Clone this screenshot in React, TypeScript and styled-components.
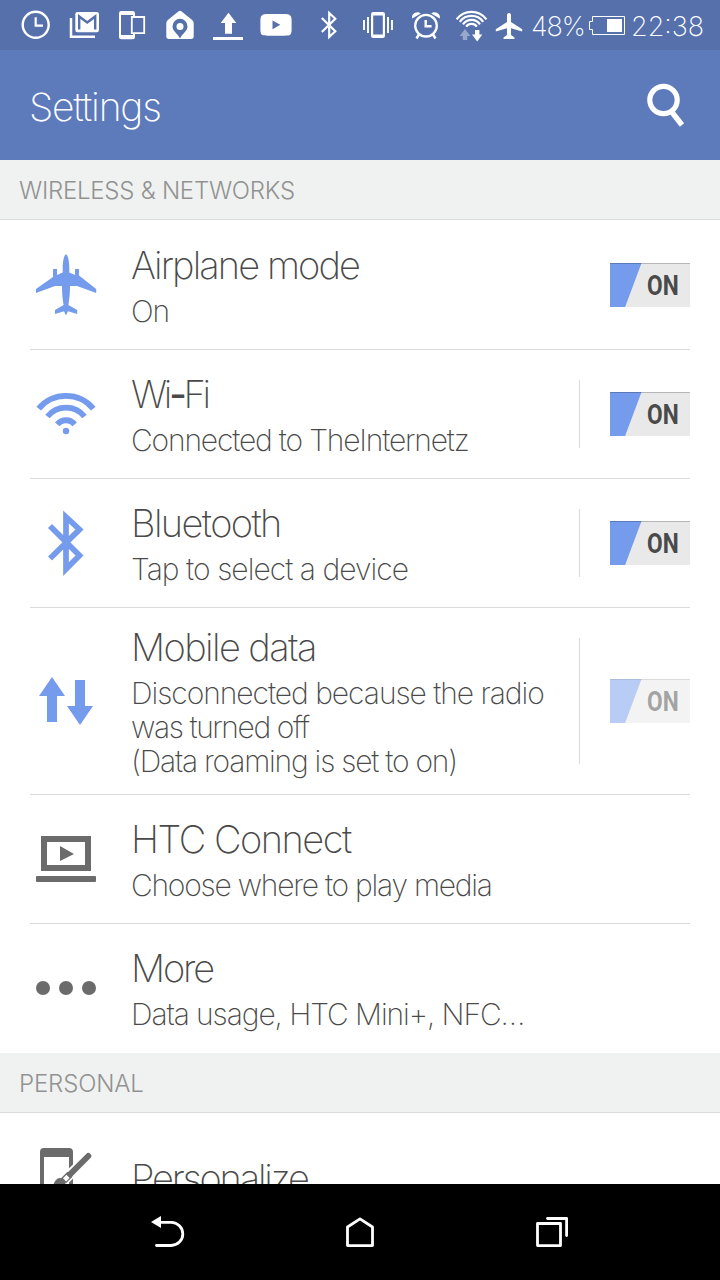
import React from "react";
import styled, { createGlobalStyle } from "styled-components";

const blue = "#759bed";
const grey = "#6b6b6b";

const GlobalStyle = createGlobalStyle`
  * { box-sizing: border-box; }
  body { margin: 0; background: #fff; font-family: Inter, "Liberation Sans", sans-serif; }
  svg { display: block; flex: none; }
`;

const Screen = styled.div`
  width: 720px;
  height: 1280px;
  display: flex;
  flex-direction: column;
  overflow: hidden;
  background: #fff;
`;

const StatusBar = styled.header`
  height: 50px;
  flex: none;
  display: flex;
  align-items: center;
  padding-left: 12px;
  background: #5570ab;
  color: #fff;
`;

const StatusText = styled.span<{ $width: number; $track: number; $left: number }>`
  width: ${(p) => p.$width}px;
  margin-left: ${(p) => p.$left}px;
  padding-top: 3px;
  font-size: 27px;
  font-weight: 200;
  line-height: 34px;
  letter-spacing: ${(p) => p.$track}px;
  white-space: nowrap;
`;

const TitleBar = styled.div`
  height: 110px;
  flex: none;
  display: flex;
  align-items: center;
  justify-content: space-between;
  padding: 4px 24px 0 29px;
  background: #5d7abb;
  color: #fff;
`;

const PageTitle = styled.h1`
  margin: 0;
  font-size: 39px;
  font-weight: 200;
  line-height: 48px;
  letter-spacing: -1.2px;
`;

const Content = styled.main`
  flex: 1;
  min-height: 0;
  overflow: hidden;
`;

const SectionHeader = styled.h2<{ $track: number }>`
  height: 60px;
  margin: 0;
  padding: 1px 19px 0;
  display: flex;
  align-items: center;
  background: #f0f2f1;
  border-bottom: 1px solid #dadcdb;
  color: #929292;
  font-size: 24px;
  font-weight: 300;
  letter-spacing: ${(p) => p.$track}px;
`;

const List = styled.ul`
  margin: 0 30px;
  padding: 0 0 1px;
  list-style: none;
`;

const Row = styled.li<{ $height?: number }>`
  height: ${(p) => p.$height ?? 129}px;
  display: flex;
  align-items: center;
  & + & { box-shadow: inset 0 1px #dadcdb; }
`;

const Labels = styled.div`
  flex: 1;
  padding: 1px 0 0 29px;
  color: #4a4a4a;
  white-space: nowrap;
`;

const Title = styled.div<{ $track: number }>`
  font-size: 38px;
  font-weight: 200;
  line-height: 46px;
  letter-spacing: ${(p) => p.$track}px;
  &:not(:last-child) { margin-bottom: 6px; }
`;

const Dash = styled.span`
  font-weight: 500;
`;

const Detail = styled.div<{ $track: number }>`
  font-size: 30px;
  font-weight: 200;
  line-height: 34.3px;
  letter-spacing: ${(p) => p.$track}px;
`;

const ToggleArea = styled.div<{ $divided?: boolean }>`
  align-self: stretch;
  margin: 31px 0 30px;
  width: 111px;
  display: flex;
  align-items: center;
  justify-content: flex-end;
  border-left: 1px solid ${(p) => (p.$divided ? "#dadcdb" : "transparent")};
`;

const Switch = styled.div<{ $disabled?: boolean }>`
  width: 80px;
  height: 44px;
  padding-right: 11px;
  display: flex;
  align-items: center;
  justify-content: flex-end;
  background: linear-gradient(rgba(0, 0, 0, 0.22), rgba(0, 0, 0, 0.22)) top / 100% 1px no-repeat,
    linear-gradient(110.5deg, ${blue} 32.2%, #e9e9e9 33.2%);
  opacity: ${(p) => (p.$disabled ? 0.5 : 1)};
`;

const SwitchLabel = styled.span`
  color: #4a4a4a;
  font: 700 27px/32px Roboto, sans-serif;
  transform: scaleX(0.84);
  transform-origin: right center;
  padding-top: 2px;
`;

const NavBar = styled.nav`
  height: 96px;
  flex: none;
  display: flex;
  align-items: center;
  justify-content: center;
  gap: 120px;
  background: #000;
`;

type IconProps = { box: string; w: number; h: number; children: React.ReactNode };
const Icon = ({ box, w, h, children }: IconProps) => (
  <svg width={w} height={h} viewBox={box} fill="none">{children}</svg>
);

const StatusIcons = () => (
  <>
    <Icon box="12 0 48 50" w={48} h={50}>
      <circle cx="35.7" cy="24.8" r="13" stroke="#fff" strokeWidth="2.4" />
      <path d="M35.7 17.3V25.6H43" stroke="#fff" strokeWidth="2.2" />
    </Icon>
    <Icon box="60 0 48 50" w={48} h={50}>
      <path d="M71 18V36.7H95" stroke="#fff" strokeWidth="2.5" />
      <rect x="75.3" y="12" width="23.7" height="20.3" rx="2.2" fill="#fff" />
      <path d="M79.2 29.5V16.5L87.2 22.5L95.2 16.5V29.5" stroke="#5570ab" strokeWidth="2.4" />
    </Icon>
    <Icon box="108 0 48 50" w={48} h={50}>
      <path fillRule="evenodd" fill="#fff" d="M121.3 11H132.7Q135 11 135 13.2V37Q135 39.3 132.7 39.3H121.3Q119 39.3 119 37V13.2Q119 11 121.3 11ZM121 15V35H133V15Z" />
      <path d="M131.8 17H144.2V33.2H131.8Z" fill="#5570ab" stroke="#fff" strokeWidth="1.8" />
    </Icon>
    <Icon box="156 0 48 50" w={48} h={50}>
      <path fill="#fff" d="M178.7 11.3Q180 10.3 181.3 11.3L192.2 20Q193.7 21.3 193.7 23V36.3Q193.7 39 191 39H169Q166.3 39 166.3 36.3V23Q166.3 21.3 167.8 20Z" />
      <path fill="#5570ab" d="M180 38.5C177.5 33 172.5 31.5 172.5 26.2A7.5 7.5 0 0 1 187.5 26.2C187.5 31.5 182.5 33 180 38.5Z" />
      <circle cx="180" cy="26.4" r="3.5" fill="#fff" />
    </Icon>
    <Icon box="204 0 48 50" w={48} h={50}>
      <path fill="#fff" d="M228.5 12.7L236.3 23H232V33.7H225V23H220.7ZM213 37H243V40H213Z" />
    </Icon>
    <Icon box="252 0 48 50" w={48} h={50}>
      <path fill="#fff" d="M276 14C286 14 288 14 289.3 14.8Q291.6 16 291.6 19V31Q291.6 34 289.3 35.2C287 36 265 36 262.7 35.2Q260.4 34 260.4 31V19Q260.4 16 262.7 14.8C264 14 266 14 276 14Z" />
      <path fill="#5570ab" d="M272.5 20.5L280.3 24.8L272.5 29.2Z" />
    </Icon>
    <Icon box="300 0 54 50" w={54} h={50}>
      <path d="M321.8 18L335.3 31.3L329.2 37V13L335.3 18.7L321.8 32" stroke="#fff" strokeWidth="2.2" />
    </Icon>
    <Icon box="354 0 48 50" w={48} h={50}>
      <path fillRule="evenodd" fill="#fff" d="M373.3 12H382.7Q385 12 385 14.2V36Q385 38 382.7 38H373.3Q371 38 371 36V14.2Q371 12 373.3 12ZM373.2 15.5V34.5H382.8V15.5Z" />
      <path d="M364 20V30M368 17V33M388 17V33M392 20V30" stroke="#fff" strokeWidth="1.9" />
    </Icon>
    <Icon box="402 0 48 50" w={48} h={50}>
      <circle cx="426" cy="25.7" r="10.8" stroke="#fff" strokeWidth="2.3" />
      <path d="M425.7 20V26.3H431.6" stroke="#fff" strokeWidth="2.4" />
      <path d="M419 34.5L416.5 38.5M433 34.5L435.5 38.5" stroke="#fff" strokeWidth="2.5" />
      <path fill="#fff" d="M412.3 18.5C410.5 14 417 10 420.8 13.5ZM439.7 18.5C441.5 14 435 10 431.2 13.5Z" />
    </Icon>
    <Icon box="450 0 42 50" w={42} h={50}>
      <g stroke="#fff" strokeWidth="2.2">
        <path d="M456.6 19.3A18.6 18.6 0 0 1 486.4 19.3" />
        <path d="M459.8 21.9A14.5 14.5 0 0 1 483.2 21.9" />
        <path d="M463 24.3A10.5 10.5 0 0 1 480 24.3" />
        <path d="M466.2 26.6A6.4 6.4 0 0 1 476.8 26.6" />
      </g>
      <path fill="#fff" opacity=".4" d="M465 29L470.3 36H467.2V40H462.8V36H459.7Z" />
      <path fill="#fff" d="M475 30H479.4V34.5H482.3L477.2 41.5L472 34.5H475Z" />
    </Icon>
    <Icon box="492 0 36 50" w={36} h={50}>
      <path fill="#fff" d="M509 13C510.5 13 511 14.3 511 16V22L522.2 29.3V31.5L511 28.3V35L514.5 37.5V39H503.5V37.5L507 35V28.3L495.8 31.5V29.3L507 22V16C507 14.3 507.5 13 509 13Z" />
    </Icon>
  </>
);

const Battery = () => (
  <Icon box="588 0 40 50" w={40} h={50}>
    <path d="M592.5 16.5H624.5V34.5H592.5V29.5H589.5V21.5H592.5Z" stroke="#fff" strokeWidth="1" />
    <rect x="607" y="19" width="15" height="13" fill="#fff" />
  </Icon>
);

const icons = {
  airplane: (
    <Icon box="30 249 72 72" w={72} h={72}>
      <path fill={blue} d="M66 254.5C68 254.5 69.3 262 69.3 267.5V272.5L75 275V269H79V275.5L96.2 289V293L77 286H70C70 295 69 301 68.4 305L77.2 310V314L68 311.3L66 315.5L64 311.3L55 314V310L63.6 305C63 301 62 295 62 286H55L36 293V289L53 277V269H57V275L62.7 272.5V267.5C62.7 262 64 254.5 66 254.5Z" />
    </Icon>
  ),
  wifi: (
    <Icon box="30 378 72 72" w={72} h={72}>
      <g stroke={blue} strokeWidth="5.8">
        <path d="M38.7 408.6A35.5 35.5 0 0 1 93.3 408.6" />
        <path d="M47.5 416.5A23.7 23.7 0 0 1 84.5 416.5" />
        <path d="M57.3 424.4A11.2 11.2 0 0 1 74.7 424.4" />
      </g>
      <circle cx="66" cy="431" r="3.2" fill={blue} />
    </Icon>
  ),
  bluetooth: (
    <Icon box="30 507 72 72" w={72} h={72}>
      <path d="M50 526L79.5 555.5L66 569V517L79.5 529.5L50 558.5" stroke={blue} strokeWidth="5.7" />
    </Icon>
  ),
  data: (
    <Icon box="30 665 72 72" w={72} h={72}>
      <path fill={blue} d="M52 677L65 696H57V722H47V696H39ZM75 680H85V706H93L80 725L67 706H75Z" />
    </Icon>
  ),
  connect: (
    <Icon box="30 823 72 72" w={72} h={72}>
      <rect x="44" y="839" width="44" height="29" stroke={grey} strokeWidth="6" />
      <path fill={grey} d="M60 846L74 854L60 861Z" />
      <rect x="36" y="876" width="60" height="6" rx="1" fill={grey} />
    </Icon>
  ),
  more: (
    <Icon box="30 952 72 72" w={72} h={72}>
      <g fill={grey}><circle cx="43" cy="988" r="7" /><circle cx="66" cy="988" r="7" /><circle cx="89" cy="988" r="7" /></g>
    </Icon>
  ),
  personalize: (
    <Icon box="30 1142 72 72" w={72} h={72}>
      <path fillRule="evenodd" fill={grey} d="M44 1148H69Q73 1148 73 1152V1204Q73 1208 69 1208H44Q40 1208 40 1204V1152Q40 1148 44 1148ZM44 1157V1200H69V1157Z" />
      <path d="M89 1155.5L58 1186.5" stroke="#fff" strokeWidth="10" />
      <path d="M88.3 1156L69 1175.3" stroke={grey} strokeWidth="6" strokeLinecap="round" />
      <path d="M70 1174.3L63.5 1180.8" stroke={grey} strokeWidth="7" />
      <path d="M68 1176.3L64.5 1179.8" stroke="#fff" strokeWidth="4.5" />
      <path fill={grey} d="M52 1190C54 1180 57 1178 61 1178C65 1179 66 1182 65 1186C62 1190 56 1191 52 1190Z" />
    </Icon>
  ),
};

type Item = {
  icon: keyof typeof icons;
  title: React.ReactNode;
  track: number;
  details: [string, number][];
  toggle?: boolean;
  divided?: boolean;
  disabled?: boolean;
  height?: number;
};

const wireless: Item[] = [
  { icon: "airplane", title: "Airplane mode", track: -1.9, details: [["On", -1]], toggle: true },
  { icon: "wifi", title: <>Wi<Dash>-</Dash>Fi</>, track: -3.2, details: [["Connected to TheInternetz", -1.17]], toggle: true, divided: true },
  { icon: "bluetooth", title: "Bluetooth", track: -1.6, details: [["Tap to select a device", -0.95]], toggle: true, divided: true },
  {
    icon: "data", title: "Mobile data", track: -1.6, height: 187, toggle: true, divided: true, disabled: true,
    details: [["Disconnected because the radio", -1.03], ["was turned off", -1.4], ["(Data roaming is set to on)", -1.23]],
  },
  { icon: "connect", title: "HTC Connect", track: -1.5, details: [["Choose where to play media", -1.24]] },
  { icon: "more", title: "More", track: -2.2, details: [["Data usage, HTC Mini+, NFC…", -1.08]] },
];

const personal: Item[] = [{ icon: "personalize", title: "Personalize", track: -2.2, details: [] }];

const SettingsList = ({ items }: { items: Item[] }) => (
  <List>
    {items.map((item) => (
      <Row key={item.icon} $height={item.height}>
        {icons[item.icon]}
        <Labels>
          <Title $track={item.track}>{item.title}</Title>
          {item.details.map(([text, track]) => (
            <Detail key={text} $track={track}>{text}</Detail>
          ))}
        </Labels>
        {item.toggle && (
          <ToggleArea $divided={item.divided}>
            <Switch $disabled={item.disabled}><SwitchLabel>ON</SwitchLabel></Switch>
          </ToggleArea>
        )}
      </Row>
    ))}
  </List>
);

export default function App() {
  return (
    <Screen>
      <GlobalStyle />
      <StatusBar>
        <StatusIcons />
        <StatusText $left={3} $width={57} $track={-1}>48%</StatusText>
        <Battery />
        <StatusText $left={3} $width={80} $track={0}>22:38</StatusText>
      </StatusBar>
      <TitleBar>
        <PageTitle>Settings</PageTitle>
        <Icon box="636 77 60 60" w={60} h={60}>
          <circle cx="663.5" cy="100" r="13.7" stroke="#fff" strokeWidth="5.2" />
          <path d="M671 111L682 125" stroke="#fff" strokeWidth="5.4" />
        </Icon>
      </TitleBar>
      <Content>
        <SectionHeader $track={-0.25}>WIRELESS &amp; NETWORKS</SectionHeader>
        <SettingsList items={wireless} />
        <SectionHeader $track={-0.15}>PERSONAL</SectionHeader>
        <SettingsList items={personal} />
      </Content>
      <NavBar>
        <Icon box="132 1196 72 72" w={72} h={72}>
          <path fill="#fff" d="M151 1222L161 1216V1228Z" />
          <path d="M160 1222.3H171.2A11.5 11.5 0 0 1 171.2 1245.5H156.5" stroke="#fff" strokeWidth="2.8" strokeLinecap="round" />
        </Icon>
        <Icon box="324 1196 72 72" w={72} h={72}>
          <path d="M347.5 1227L360 1218.8L372.5 1227V1245.6H347.5Z" stroke="#fff" strokeWidth="2.8" strokeLinejoin="round" />
        </Icon>
        <Icon box="516 1196 72 72" w={72} h={72}>
          <path d="M537.5 1223.5H560.5V1245.6H537.5ZM547.5 1218.5H566.6V1235.5" stroke="#fff" strokeWidth="2.8" strokeLinecap="round" strokeLinejoin="round" />
        </Icon>
      </NavBar>
    </Screen>
  );
}
